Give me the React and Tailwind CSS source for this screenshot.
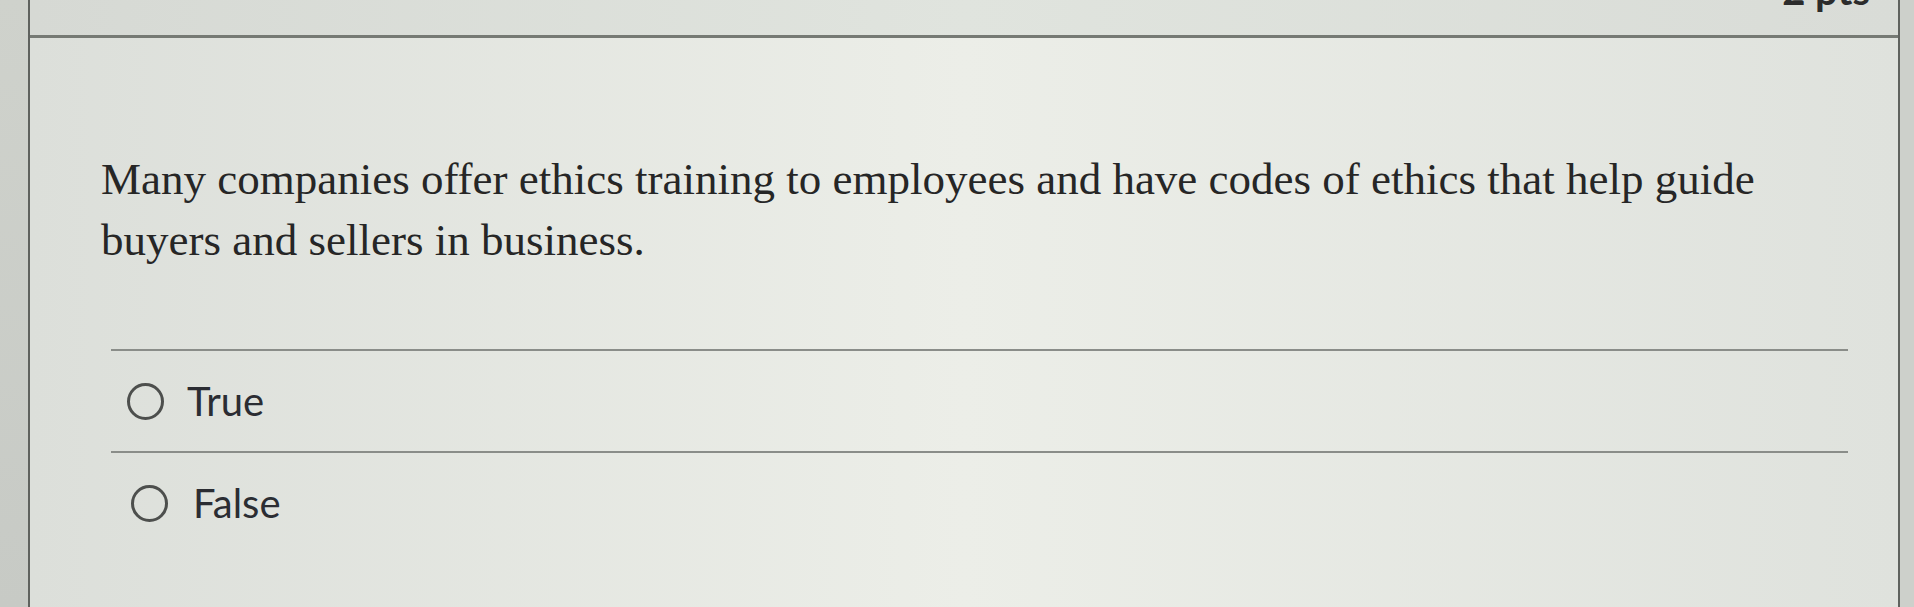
export default function App() {
  return (
    <div className="w-full h-[607px] flex overflow-hidden bg-[#cdd0cb]">
      <div className="w-[28px] shrink-0 bg-linear-to-b from-[#cfd2cc] to-[#c7cac5]" />
      <div className="flex-1 flex flex-col border-l-2 border-r-2 border-[#5f625e] mr-[14px] bg-linear-to-r from-[#dcdfda] via-[#eceee8] to-[#dfe2dd]">
        <div className="h-[38px] shrink-0 relative overflow-hidden border-b-[3px] border-[#767a74] bg-linear-to-r from-[#d6d9d4] via-[#e0e4de] to-[#d9dcd7]">
          <span
            className="absolute right-[28px] top-[-30px] text-[40px] leading-[40px] font-bold text-[#2c2c2c]"
            style={{ fontFamily: "Lato, 'Liberation Sans', sans-serif" }}
          >
            2 pts
          </span>
        </div>
        <div className="flex-1 flex flex-col pl-[71px] pt-[111px]">
          <p
            className="text-[45px] leading-[61px] text-[#262626] max-w-[1800px]"
            style={{ fontFamily: "'Liberation Serif', 'Times New Roman', serif" }}
          >
            Many companies offer ethics training to employees and have codes of ethics that help guide
            <br />
            buyers and sellers in business.
          </p>
          <div
            className="mt-[78px] ml-[10px] mr-[50px] flex flex-col text-[40px] text-[#2b2d33]"
            style={{ fontFamily: "Lato, 'Liberation Sans', sans-serif" }}
          >
            <div className="h-[102px] flex items-center border-t-2 border-[#8a8d89]">
              <span className="ml-[16px] w-[37px] h-[37px] rounded-full border-[3px] border-[#4d4f4d] shrink-0" />
              <span className="ml-[23px]">True</span>
            </div>
            <div className="h-[102px] flex items-center border-t-2 border-[#8a8d89]">
              <span className="ml-[20px] w-[37px] h-[37px] rounded-full border-[3px] border-[#4d4f4d] shrink-0" />
              <span className="ml-[25px]">False</span>
            </div>
          </div>
        </div>
      </div>
    </div>
  );
}
